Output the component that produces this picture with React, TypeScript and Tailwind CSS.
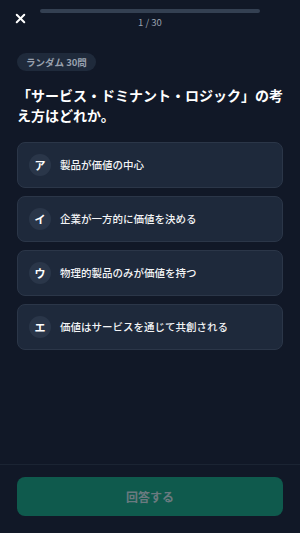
import { X } from "lucide-react"

const CHOICES = [
  { label: "ア", text: "製品が価値の中心" },
  { label: "イ", text: "企業が一方的に価値を決める" },
  { label: "ウ", text: "物理的製品のみが価値を持つ" },
  { label: "エ", text: "価値はサービスを通じて共創される" },
]

function Choice({ label, text }: { label: string; text: string }) {
  return (
    <button
      type="button"
      className="flex h-[46px] w-full items-center gap-[9px] rounded-lg border border-[#2b3648] bg-[#1e293b] px-[11px] text-left"
    >
      <span className="flex h-[22px] w-[22px] shrink-0 items-center justify-center rounded-full bg-[#2a3649] text-[11px] font-bold text-white">
        {label}
      </span>
      <span className="text-[10.5px] font-medium text-gray-100">{text}</span>
    </button>
  )
}

export default function App() {
  return (
    <div
      className="flex h-[533px] w-[300px] flex-col bg-[#111827] text-white"
      style={{ fontFamily: '"Noto Sans CJK JP", "Noto Sans", sans-serif' }}
    >
      <div className="flex items-start px-[13px] pt-[9px]">
        <X size={15} strokeWidth={3.2} className="mt-[2px] text-white" />
        <div className="ml-[12px] flex w-[220px] flex-col items-center">
          <div className="h-[4px] w-full rounded-full bg-[#344052]" />
          <span className="mt-[3px] text-[9.5px] leading-[12px] text-gray-400">1 / 30</span>
        </div>
      </div>

      <div className="flex flex-col px-[17px] pt-[25px]">
        <span className="self-start rounded-full bg-[#1f2a3b] px-[9px] py-[3px] text-[9.5px] font-bold leading-[12px] text-gray-400">
          ランダム 30問
        </span>
        <h1 className="mt-[14px] w-[270px] break-all text-[14px] font-bold leading-[20px]">
          「サービス・ドミナント・ロジック」の考え方はどれか。
        </h1>
        <div className="mt-[17px] flex flex-col gap-[8px]">
          {CHOICES.map((c) => (
            <Choice key={c.label} {...c} />
          ))}
        </div>
      </div>

      <div className="mt-auto border-t border-[#1b2433] px-[17px] pt-[12px] pb-[17px]">
        <button
          type="button"
          className="flex h-[39px] w-full items-center justify-center rounded-lg bg-[#0f5a4d] text-[12px] font-bold text-[#6b7a80]"
        >
          回答する
        </button>
      </div>
    </div>
  )
}
